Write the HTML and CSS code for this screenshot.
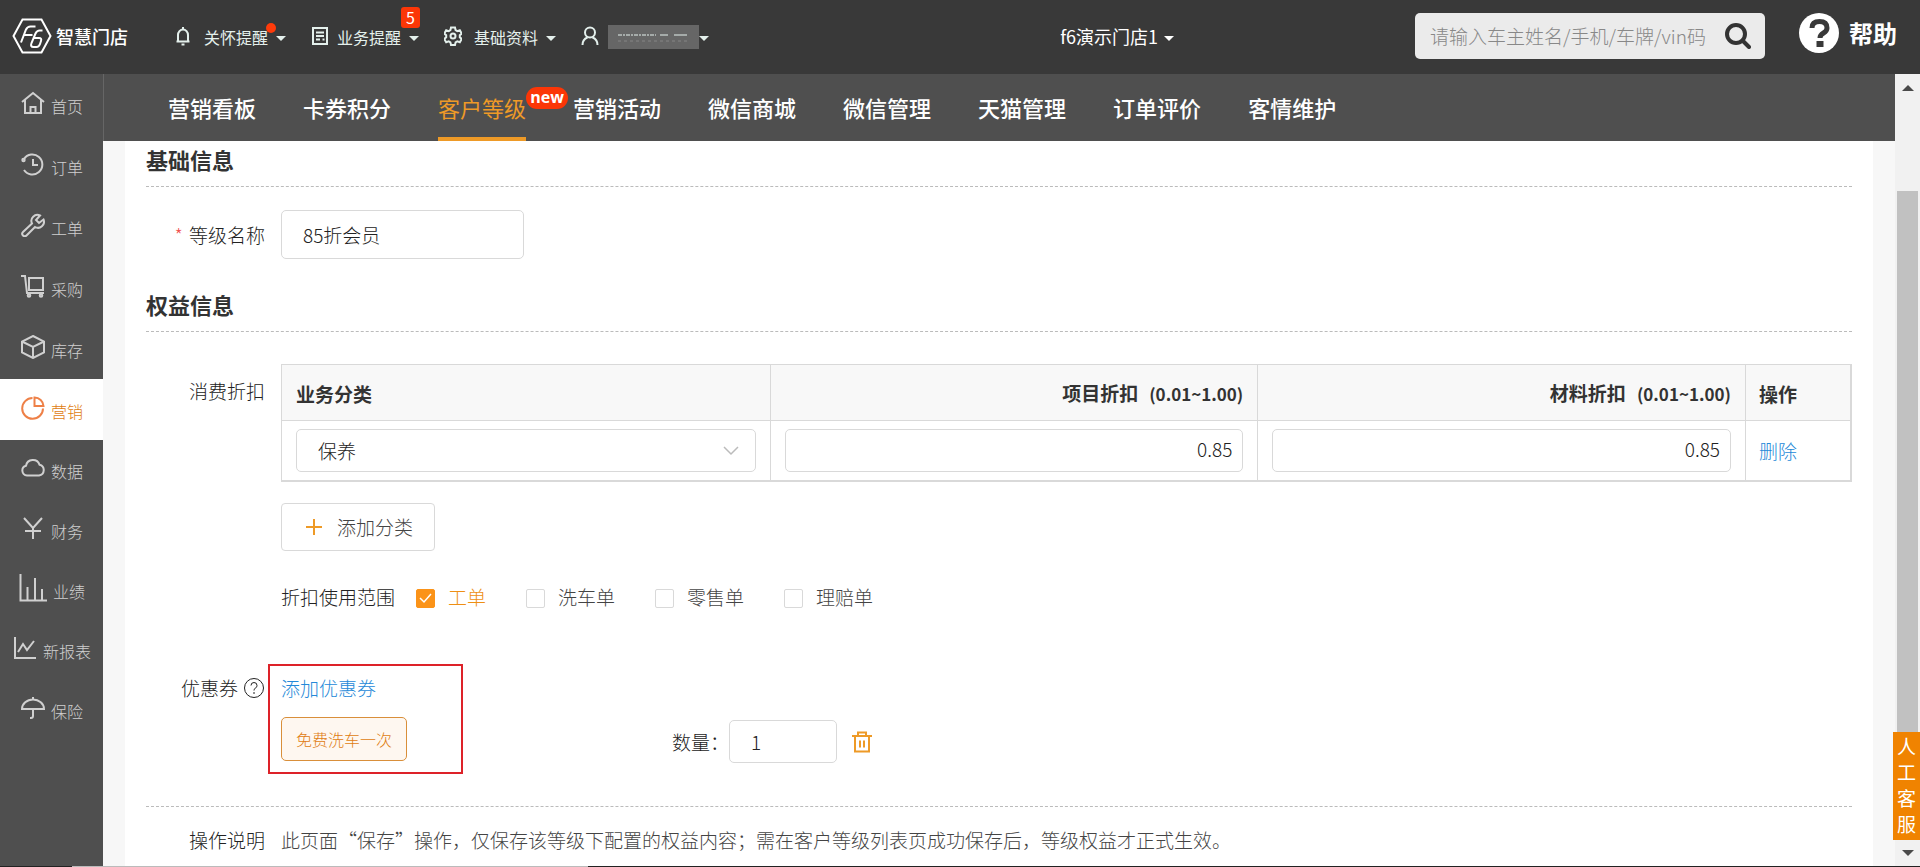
FILE: index.html
```html
<!DOCTYPE html>
<html lang="zh-CN">
<head>
<meta charset="utf-8">
<meta name="viewport" content="width=device-width, initial-scale=1">
<title>智慧门店 - 客户等级</title>
<link rel="stylesheet" href="styles.css">
</head>
<body>
<header class="topbar">
  <a class="brand" href="#">
    <svg class="brand-mark" viewBox="0 0 40 36" aria-hidden="true"><path d="M10.500 1.500h19L38.500 18l-9 16.500h-19L1.500 18z"/><path d="M23.500 8.500h-5q-3 0-4.500 3l-5 13M12.500 17h8"/><path d="M30.500 12.500h-3q-2.500 0-4 3l-4 9.500q-1.500 4 2 4h3q2.500 0 3.500-3l1-3q1-3-2-3h-5"/></svg>
    <span class="brand-name">智慧门店</span>
  </a>
  <nav class="tools" aria-label="快捷菜单">
    <button class="tool" type="button">
      <svg class="tool-icon" viewBox="0 0 18 20" aria-hidden="true"><path d="M4 15.500V9a5 5.500 0 0 1 10 0v6.500M2.500 15.500h13M9 3.500V1M7.500 18.500h3"/></svg>
      <span class="tool-label">关怀提醒<i class="dot"></i></span><span class="caret"></span>
    </button>
    <button class="tool" type="button">
      <svg class="tool-icon" viewBox="0 0 18 20" aria-hidden="true"><path d="M2 2h14v16H2zM5 6.500h8M5 10h8M5 13.500h4M12.500 12.500v2"/></svg>
      <span class="tool-label">业务提醒<b class="count">5</b></span><span class="caret"></span>
    </button>
    <button class="tool" type="button">
      <svg class="tool-icon" viewBox="0 0 18 20" aria-hidden="true"><path d="M7 1.500h4l.6 2.600 1.700 1 2.500-.8 1.900 3.300-1.900 1.700v1.900l1.900 1.700-1.900 3.300-2.500-.8-1.700 1-.6 2.600H7l-.6-2.600-1.700-1-2.500.8-1.900-3.300 1.900-1.700V9.300L.3 7.600l1.900-3.300 2.500.8 1.700-1z"/><circle cx="9" cy="10" r="2.500"/></svg>
      <span class="tool-label">基础资料</span><span class="caret"></span>
    </button>
    <button class="tool user" type="button" aria-label="当前用户">
      <svg class="tool-icon" viewBox="0 0 18 20" aria-hidden="true"><circle cx="9" cy="6.500" r="5"/><path d="M1.500 19c0-4.500 2.500-6.500 5-7.500M16.500 19c0-4.500-2.500-6.500-5-7.500"/></svg>
      <span class="masked"><svg viewBox="0 0 70 12" aria-hidden="true"><path d="M0 4h38" stroke-dasharray="4 1 2 1"/><path d="M42 4h8M56 4h13"/><path class="faint" d="M0 10h70" stroke-dasharray="3 3"/></svg></span><span class="caret"></span>
    </button>
  </nav>
  <button class="store" type="button">f6演示门店1<span class="caret"></span></button>
  <form class="search" role="search">
    <input class="search-input" type="text" aria-label="搜索" placeholder="请输入车主姓名/手机/车牌/vin码">
    <button class="search-btn" type="button" aria-label="搜索"><svg viewBox="0 0 26 26" aria-hidden="true"><circle cx="11" cy="11" r="9"/><path d="M18 18l6 6"/></svg></button>
  </form>
  <a class="help" href="#">
    <svg class="help-icon" viewBox="0 0 40 40" aria-hidden="true"><circle cx="20" cy="20" r="20"/><path d="M13 15q0-6.500 7.500-6.500T28 15q0 3-3.500 5t-3.500 5"/><path d="M17.500 28h7v6h-7z" class="help-dot"/></svg>
    帮助
  </a>
</header>

<div class="shell">
  <nav class="sidebar" aria-label="主菜单">
    <a class="side" href="#"><svg viewBox="0 0 24 24"><path d="M1 11L12 2l11 9M4 9v13h16V9M9.500 22v-6h5v6"/></svg>首页</a>
    <a class="side" href="#"><svg viewBox="0 0 24 24"><path d="M3 7a10 10 0 1 1 0 11M12 7v6h5"/><circle cx="2.500" cy="8" r="1.200"/></svg>订单</a>
    <a class="side" href="#"><svg viewBox="0 0 24 24"><path d="M19 2.500a6 6 0 0 0-8 8L2 19a2.300 2.300 0 0 0 3.500 3.500L14 14a6 6 0 0 0 8.500-7.500L18 10l-3-3z"/></svg>工单</a>
    <a class="side" href="#"><svg viewBox="0 0 24 24"><path d="M0 2h4l2 17h17M8 4h14v12H8z"/><circle cx="8" cy="21.500" r="1.300"/><circle cx="20" cy="21.500" r="1.300"/></svg>采购</a>
    <a class="side" href="#"><svg viewBox="0 0 24 24"><path d="M12 1l11 5.500v11L12 23 1 17.500v-11zM1 6.500L12 12l11-5.500M12 12v11"/></svg>库存</a>
    <a class="side active" href="#" aria-current="page"><svg viewBox="0 0 24 24"><path d="M11.500 2A10.400 10.400 0 1 0 22 12.500M13.500 1.500v8.500H22.500a9 9 0 0 0-9-8.500z"/></svg>营销</a>
    <a class="side" href="#"><svg viewBox="0 0 24 24"><path d="M6 19.500a5 5 0 0 1-1-9.800 7 7 0 0 1 13.500-1A5.500 5.500 0 0 1 18 19.500z"/></svg>数据</a>
    <a class="side" href="#"><svg viewBox="0 0 24 24"><path d="M3 2l9 10 9-10M12 12v11M4 15h16"/></svg>财务</a>
    <a class="side" href="#"><svg class="wide" viewBox="0 0 28 28"><path d="M1.500 0v26.500H28M8.500 26V13M16 26V4M23 26V15"/></svg>业绩</a>
    <a class="side" href="#"><svg viewBox="0 0 24 24"><path d="M2 1v21h21M5 16l5-8 4 6 7-9"/></svg>新报表</a>
    <a class="side" href="#"><svg viewBox="0 0 24 24"><path d="M1 13a11 9.500 0 0 1 22 0zM12 3.500V1M12 13v7a2 2 0 0 1-2 2H9"/></svg>保险</a>
  </nav>

  <div class="workspace">
    <nav class="tabs" aria-label="营销菜单">
      <a class="tab" href="#">营销看板</a>
      <a class="tab" href="#">卡券积分</a>
      <a class="tab active" href="#" aria-current="page">客户等级<b class="new">new</b></a>
      <a class="tab" href="#">营销活动</a>
      <a class="tab" href="#">微信商城</a>
      <a class="tab" href="#">微信管理</a>
      <a class="tab" href="#">天猫管理</a>
      <a class="tab" href="#">订单评价</a>
      <a class="tab" href="#">客情维护</a>
    </nav>
    <main class="page">
      <div class="sheet">
        <h2 class="section-title">基础信息</h2>
        <div class="row name-row">
          <label class="label" for="level-name"><span class="required">*</span>等级名称</label>
          <input class="field name-field" id="level-name" type="text" value="85折会员">
        </div>

        <h2 class="section-title">权益信息</h2>
        <div class="row discount-row">
          <div class="label discount-label">消费折扣</div>
          <div class="body">
            <table class="rates">
              <colgroup><col><col><col><col class="col-action"></colgroup>
              <thead>
                <tr><th>业务分类</th><th class="num">项目折扣<span class="range">(0.01~1.00)</span></th><th class="num">材料折扣<span class="range">(0.01~1.00)</span></th><th>操作</th></tr>
              </thead>
              <tbody>
                <tr>
                  <td><select class="field select" aria-label="业务分类"><option>保养</option></select></td>
                  <td><input class="field rate" type="text" aria-label="项目折扣" value="0.85"></td>
                  <td><input class="field rate" type="text" aria-label="材料折扣" value="0.85"></td>
                  <td><a class="link" href="#">删除</a></td>
                </tr>
              </tbody>
            </table>
            <button class="add-btn" type="button"><svg viewBox="0 0 16 16" aria-hidden="true"><path d="M8 0v16M0 8h16"/></svg>添加分类</button>
            <div class="scope" role="group" aria-labelledby="scope-title">
              <span class="scope-title" id="scope-title">折扣使用范围</span>
              <label class="check"><input type="checkbox" checked>工单</label>
              <label class="check"><input type="checkbox">洗车单</label>
              <label class="check"><input type="checkbox">零售单</label>
              <label class="check"><input type="checkbox">理赔单</label>
            </div>
          </div>
        </div>

        <div class="row coupon-row">
          <div class="label coupon-label">优惠券<svg viewBox="0 0 22 22" aria-hidden="true"><circle cx="11" cy="11" r="9.500"/><path d="M8 8.500q0-3 3-3t3 3q0 1.500-1.500 2.500T11 13.500M11 15v2"/></svg></div>
          <div class="body coupon-body">
            <div class="coupon-pick">
              <a class="link" href="#">添加优惠券</a>
              <span class="tag">免费洗车一次</span>
            </div>
            <div class="quantity">
              <label for="qty">数量：</label>
              <input class="field qty" id="qty" type="text" value="1">
              <button class="trash" type="button" aria-label="删除优惠券"><svg viewBox="0 0 20 22" aria-hidden="true"><path d="M0 5h20M6 4.500V1.500h8v3M3 5v15.500h14V5M8 9.500v7M12 9.500v7"/></svg></button>
            </div>
          </div>
        </div>

        <div class="row note-row">
          <div class="label">操作说明</div>
          <p class="note">此页面“保存”操作，仅保存该等级下配置的权益内容；需在客户等级列表页成功保存后，等级权益才正式生效。</p>
        </div>
      </div>
    </main>
  </div>

  <div class="scrollbar" aria-hidden="true">
    <span class="arrow up"></span>
    <span class="thumb"></span>
    <span class="arrow down"></span>
  </div>
  <button class="service" type="button">人工客服</button>
</div>
<div class="edge"></div>
</body>
</html>
```
FILE: styles.css
```css
* { box-sizing: border-box; }

body {
  margin: 0;
  height: 100vh;
  display: flex;
  flex-direction: column;
  overflow: hidden;
  font-family: "Noto Sans CJK SC", sans-serif;
  font-size: 19px;
  font-weight: 300;
  line-height: 28px;
  color: #222;
  background: #f7f7f7;
}

a { text-decoration: none; color: inherit; }

button, input, select { font: inherit; color: inherit; }

button { border: 0; padding: 0; background: none; }

svg { fill: none; stroke: currentColor; flex: none; display: block; }

/* top bar */
.topbar {
  display: flex;
  align-items: center;
  height: 74px;
  flex: none;
  padding: 0 23px 0 12px;
  background: #393939;
  color: #fff;
}

.brand { display: flex; align-items: center; gap: 4px; padding-bottom: 2px; }
.brand-mark { width: 40px; height: 36px; stroke-width: 2; }
.brand-name { font-size: 18px; font-weight: 500; }

.tools { display: flex; gap: 25px; margin-left: 46px; padding-bottom: 1px; }

.tool {
  display: flex;
  align-items: center;
  font-size: 16px;
  font-weight: 400;
  color: #e4f0ec;
}

.tool-icon { width: 18px; height: 20px; margin: 0 12px 2px 0; stroke-width: 2; }
.tool:nth-child(2) .tool-icon { margin-right: 8px; }
.tool-label { position: relative; }

.caret {
  margin: 4px 0 0 8px;
  border: 5px solid transparent;
  border-top-color: currentColor;
  border-bottom: 0;
}

.dot {
  position: absolute;
  right: -8px;
  top: 0;
  width: 10px;
  height: 10px;
  border-radius: 50%;
  background: #ff3b0a;
}

.count {
  position: absolute;
  right: -19px;
  top: -16px;
  width: 19px;
  height: 21px;
  border-radius: 3px;
  background: #fb3607;
  color: #fff;
  font-weight: 400;
  line-height: 21px;
  text-align: center;
}

.masked {
  width: 91px;
  height: 24px;
  padding: 6px 10px;
  background: #666;
}

.masked svg { width: 70px; height: 12px; stroke-width: 1; }
.masked .faint { stroke: #858585; }
.user .tool-icon { margin-right: 9px; }
.user .caret { margin-left: 0; }

.store {
  display: flex;
  align-items: center;
  margin: 0 241px 0 auto;
  padding-bottom: 2px;
  font-size: 18px;
  font-weight: 400;
}

.store .caret { margin-left: 6px; }

.search {
  display: flex;
  align-items: center;
  width: 350px;
  height: 46px;
  margin-top: -2px;
  padding: 0 14px 0 15px;
  border-radius: 5px;
  background: #ebebeb;
}

.search-input {
  flex: 1;
  min-width: 0;
  padding: 0;
  border: 0;
  outline: 0;
  background: none;
}

.search-input::placeholder { color: #888; opacity: 1; }
.search-btn { color: #333; }
.search-btn svg { width: 26px; height: 26px; stroke-width: 4; stroke-linecap: round; }

.help {
  display: flex;
  align-items: center;
  gap: 10px;
  margin-left: 34px;
  padding-bottom: 8px;
  font-size: 24px;
  font-weight: 700;
}

.help-icon { width: 40px; height: 40px; stroke: #393939; stroke-width: 5; }
.help-icon circle { fill: #fff; stroke: none; }
.help-icon .help-dot { fill: #393939; stroke: none; }

/* frame */
.shell { position: relative; display: flex; flex: 1; min-height: 0; }

.sidebar {
  width: 103px;
  flex: none;
  background: #4f4f4f;
  color: #d0d0d0;
  font-size: 16px;
}

.side {
  display: flex;
  align-items: center;
  justify-content: center;
  gap: 6px;
  height: 61px;
  padding: 2px 0 0 1px;
}

.side svg { width: 24px; height: 24px; margin-bottom: 6px; stroke-width: 2; }
.side svg.wide { width: 28px; height: 28px; }
.side.active { background: #fff; color: #e07c10; }
.side.active svg { color: #ee8047; }
.side.active ~ .side { height: 60px; }

.workspace { display: flex; flex-direction: column; flex: 1; min-width: 0; }

.tabs {
  display: flex;
  gap: 47px;
  height: 67px;
  flex: none;
  padding-left: 64px;
  border-left: 1px solid #666;
  background: #4f4f4f;
  color: #fff;
  font-size: 22px;
  font-weight: 500;
}

.tab { position: relative; line-height: 67px; white-space: nowrap; }
.tab.active { color: #ee9a27; font-weight: 400; border-bottom: 4px solid #ee9a27; }

.new {
  position: absolute;
  left: 100%;
  top: 13px;
  width: 42px;
  height: 22px;
  border-radius: 11px;
  background: #fb3607;
  color: #fff;
  font-family: "Open Sans", sans-serif;
  font-size: 16px;
  font-weight: 700;
  line-height: 21px;
  text-align: center;
}

.page { flex: 1; min-height: 0; padding: 0 22px; overflow: hidden; background: #f7f7f7; }

.sheet { min-height: 100%; padding: 4px 21px 0; background: #fff; }

.section-title {
  margin: 0;
  padding-bottom: 13px;
  border-bottom: 1px dashed #bbb;
  color: #333;
  font-size: 22px;
  font-weight: 700;
  line-height: 28px;
}

.row { display: flex; gap: 16px; }
.label { width: 119px; flex: none; text-align: right; white-space: nowrap; }
.body { flex: 1; min-width: 0; }

.required { margin-right: 6px; color: #f05050; }

.field {
  border: 1px solid #d9d9d9;
  border-radius: 5px;
  outline: 0;
  background: #fff;
}

.name-row { align-items: center; padding: 23px 0 31px; }
.name-field { width: 243px; height: 49px; padding: 0 21px; }

.discount-row { padding-top: 32px; }
.discount-label { padding-top: 13px; }

.rates {
  width: 100%;
  table-layout: fixed;
  border-collapse: separate;
  border-spacing: 0;
  border: 1px solid #d9d9d9;
  border-width: 1px 2px 2px 1px;
}

.col-action { width: 105px; }

.rates th {
  height: 56px;
  padding: 2px 14px 0;
  border-bottom: 1px solid #d9d9d9;
  background: #f8f8f8;
  color: #333;
  text-align: left;
  font-weight: 700;
}

.rates td { height: 59px; padding: 0 14px; }
.rates th + th, .rates td + td { border-left: 1px solid #d9d9d9; }
.rates th:last-child, .rates td:last-child { padding-left: 13px; }
.rates .num { text-align: right; }
.range { margin-left: 11px; font-size: 17px; }

.select, .rate { display: block; width: 100%; height: 43px; }
.rate { padding: 0 10px 4px; text-align: right; }

.select {
  appearance: none;
  padding: 0 21px;
  background: #fff url("data:image/svg+xml,%3Csvg xmlns='http://www.w3.org/2000/svg' width='16' height='10' fill='none' stroke='%23bbb' stroke-width='1.500'%3E%3Cpath d='M1 1l7 7 7-7'/%3E%3C/svg%3E") no-repeat right 16px center;
}

.link { color: #2589d8; }

.add-btn {
  display: flex;
  align-items: center;
  gap: 15px;
  height: 48px;
  margin-top: 21px;
  padding: 0 21px 0 24px;
  border: 1px solid #d9d9d9;
  border-radius: 4px;
  color: #444;
}

.add-btn svg { width: 16px; height: 16px; color: #ee9a27; stroke-width: 2; }

.scope {
  display: flex;
  align-items: center;
  gap: 40px;
  margin-top: 32px;
}

.scope-title { margin-right: -19px; }
.check { display: flex; align-items: center; gap: 13px; color: #444; }
.check:has(:checked) { color: #ee8f14; }

.check input {
  appearance: none;
  width: 19px;
  height: 19px;
  margin: 2px 0 0;
  border: 1px solid #d9d9d9;
  border-radius: 2px;
}

.check input:checked {
  border-color: #fb9318;
  background: #fb9318 url("data:image/svg+xml,%3Csvg xmlns='http://www.w3.org/2000/svg' width='13' height='11' fill='none' stroke='white' stroke-width='1.500'%3E%3Cpath d='M1 5l4 4 7-8'/%3E%3C/svg%3E") no-repeat center;
}

/* coupons */
.coupon-row { padding: 53px 0 32px; border-bottom: 1px dashed #bbb; gap: 3px; }
.coupon-label { display: flex; justify-content: flex-end; align-items: center; gap: 5px; height: 28px; margin-top: 10px; }
.coupon-label svg { width: 22px; height: 22px; stroke-width: 1; }
.coupon-body { display: flex; align-items: flex-end; }

.coupon-pick {
  display: flex;
  flex-direction: column;
  align-items: flex-start;
  gap: 15px;
  width: 195px;
  padding: 8px 11px 11px;
  border: 2px solid #dd2229;
}

.tag {
  padding: 7px 14px;
  border: 1px solid #d98f3a;
  border-radius: 5px;
  background: #fef7f0;
  color: #e07c10;
  font-size: 16px;
}

.quantity { display: flex; align-items: center; margin-left: 209px; padding-bottom: 11px; }
.qty { width: 108px; height: 43px; padding: 0 21px; }
.trash { margin-left: 15px; color: #ee9a27; }
.trash svg { width: 20px; height: 22px; stroke-width: 2; }

.note-row { padding-top: 19px; }
.note { margin: 0; color: #444; }

/* scroll gutter */
.scrollbar {
  display: flex;
  flex-direction: column;
  align-items: center;
  width: 25px;
  flex: none;
  padding: 11px 0 10px;
  background: #f1f1f1;
}

.arrow { border: 6px solid transparent; }
.arrow.up { border-top: 0; border-bottom-color: #4a4a4a; }
.arrow.down { border-bottom: 0; border-top-color: #4a4a4a; }
.thumb { flex: 1; width: 21px; margin: 100px 0 24px; background: #c1c1c1; }

.service {
  position: absolute;
  right: 0;
  bottom: 26px;
  width: 27px;
  height: 108px;
  padding: 0 4px 2px;
  background: #f08300;
  color: #fff;
  font-weight: 400;
  line-height: 26px;
  word-break: break-all;
}

.edge { height: 1px; flex: none; background: linear-gradient(90deg, #222 72px, #bbb 72px 588px, #222 588px); }
```
